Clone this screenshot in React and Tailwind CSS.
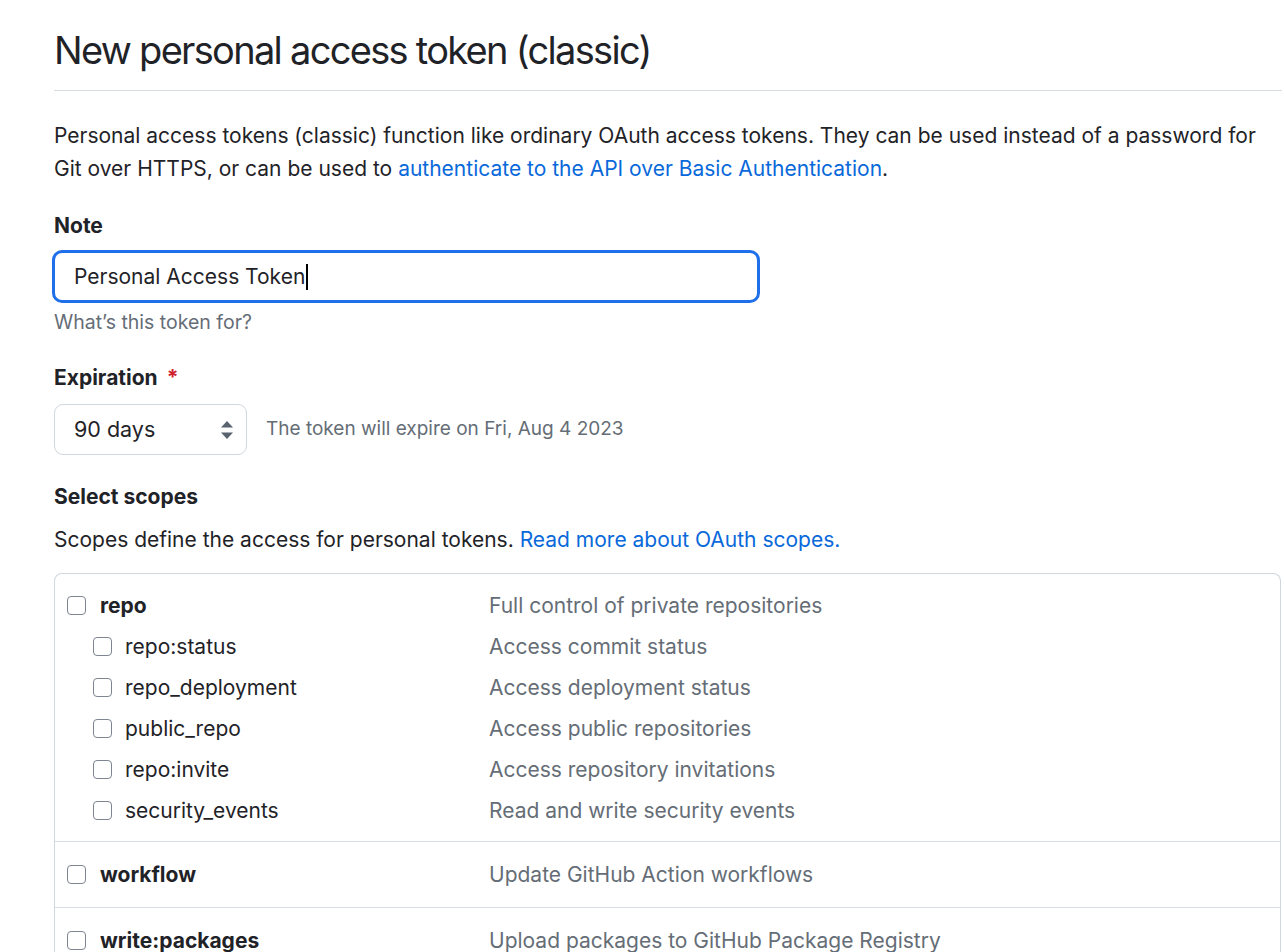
const SCOPE_GROUPS = [
  {
    name: 'repo',
    description: 'Full control of private repositories',
    children: [
      { name: 'repo:status', description: 'Access commit status' },
      { name: 'repo_deployment', description: 'Access deployment status' },
      { name: 'public_repo', description: 'Access public repositories' },
      { name: 'repo:invite', description: 'Access repository invitations' },
      { name: 'security_events', description: 'Read and write security events' },
    ],
  },
  { name: 'workflow', description: 'Update GitHub Action workflows', children: [] },
  { name: 'write:packages', description: 'Upload packages to GitHub Package Registry', children: [] },
];

function Checkbox() {
  return (
    <span className="block w-[19px] h-[19px] shrink-0 rounded-[4px] border-[1.5px] border-[#7d8590] bg-white" />
  );
}

function ScopeRow({ name, description, child }) {
  return (
    <div className="flex items-center h-[41px]">
      <div className={`flex items-center w-[434px] ${child ? 'pl-[38px]' : 'pl-[12px]'}`}>
        <Checkbox />
        <span
          className={`${child ? 'ml-[13px] font-normal' : 'ml-[14px] font-bold'} text-[#1f2328]`}
        >
          {name}
        </span>
      </div>
      <span className="text-[#656d76]">{description}</span>
    </div>
  );
}

export default function App() {
  return (
    <div
      className="min-h-screen bg-white text-[#1f2328] text-[21px] leading-[30px]"
      style={{ fontFamily: 'Inter, "Noto Sans", "Liberation Sans", sans-serif' }}
    >
      <div className="pl-[54px] w-[1282px]">
        {/* Header */}
        <div className="pt-[23px] pb-[13px] border-b border-[#d8dee4]">
          <h1 className="text-[38px] leading-[54px] font-normal tracking-[-1.7px]">
            New personal access token (classic)
          </h1>
        </div>

        <p className="mt-[28px] leading-[33px] w-[1227px]">
          Personal access tokens (classic) function like ordinary OAuth access tokens. They can be
          used instead of a password for Git over HTTPS, or can be used to{' '}
          <a className="text-[#0969da]">authenticate to the API over Basic Authentication</a>.
        </p>

        {/* Note */}
        <div className="mt-[26px] font-bold">Note</div>
        <div className="mt-[9px] -ml-[2px] w-[708px] h-[53px] rounded-[10px] border-[3.5px] border-[#1f6feb] flex items-center pl-[19px]">
          <span>Personal Access Token</span>
          <span className="w-[2px] h-[26px] bg-black ml-[1px]" />
        </div>
        <div className="mt-[6px] text-[19.5px] leading-[27px] text-[#656d76]">
          What’s this token for?
        </div>

        {/* Expiration */}
        <div className="mt-[27px] font-bold">
          Expiration <span className="text-[#cf222e] ml-[4px]">*</span>
        </div>
        <div className="mt-[11px] flex items-center">
          <div className="w-[193px] h-[51px] rounded-[9px] border border-[#d0d7de] flex items-center justify-between pl-[19px] pr-[13px] text-[21.5px] pb-[2px]">
            <span>90 days</span>
            <svg width="12" height="20" viewBox="0 0 12 20" className="mt-[2px]">
              <path d="M6 1 L12 7.5 L0 7.5 Z" fill="#59636e" />
              <path d="M6 19 L12 12.5 L0 12.5 Z" fill="#59636e" />
            </svg>
          </div>
          <span className="ml-[19px] text-[19px] text-[#656d76] pb-[2px]">
            The token will expire on Fri, Aug 4 2023
          </span>
        </div>

        {/* Scopes */}
        <div className="mt-[27px] font-bold">Select scopes</div>
        <p className="mt-[13px]">
          Scopes define the access for personal tokens.{' '}
          <a className="text-[#0969da]">Read more about OAuth scopes.</a>
        </p>

        <div className="mt-[18px] w-[1227px] border border-[#d0d7de] rounded-[8px] border-b-0">
          {SCOPE_GROUPS.map((group, i) => (
            <div
              key={group.name}
              className={`${i > 0 ? 'border-t border-[#d8dee4] py-[12px]' : 'pt-[11px] pb-[10px]'}`}
            >
              <ScopeRow name={group.name} description={group.description} />
              {group.children.map((c) => (
                <ScopeRow key={c.name} name={c.name} description={c.description} child />
              ))}
            </div>
          ))}
        </div>
      </div>
    </div>
  );
}
